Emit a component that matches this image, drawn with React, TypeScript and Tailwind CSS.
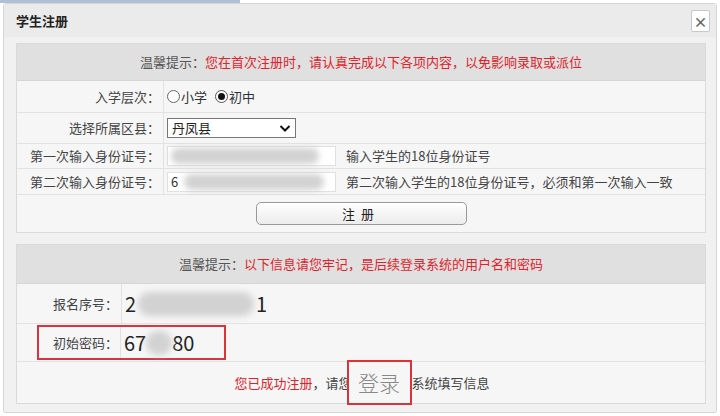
import React from "react";

const font = { fontFamily: '"Noto Sans CJK SC", "Liberation Sans", sans-serif' };

const Blob = ({ className }: { className: string }) => (
  <div className={`rounded-full bg-[#d2d2d2] blur-[3px] ${className}`} />
);

const Row = ({
  label,
  h,
  children,
  labelW = "w-[147px]",
}: {
  label: string;
  h: string;
  children: React.ReactNode;
  labelW?: string;
}) => (
  <div className={`flex ${h} border-b border-[#e2e2e2]`}>
    <div className={`${labelW} shrink-0 flex items-center justify-end pr-[3px] border-r border-[#e2e2e2] text-[#444]`}>
      {label}
    </div>
    <div className="flex-1 flex items-center pl-[3px]">{children}</div>
  </div>
);

export default function App() {
  return (
    <div className="w-[720px] h-[416px] bg-white overflow-hidden text-[13px]" style={font}>
      <div className="h-[3px] w-[240px] bg-[#aebfd6]" />
      <div className="mx-[3px] h-[410px] bg-[#f1f1f1] border border-[#d4d4d4] rounded-[3px] flex flex-col">
        {/* title bar */}
        <div className="h-[33px] shrink-0 flex items-center justify-between pl-[12px] pr-[6px] bg-[#ebebeb]">
          <span className="font-bold text-[13px] text-[#222]">学生注册</span>
          <div className="w-[19px] h-[22px] bg-white border border-[#c9c9c9] rounded-[2px] flex items-center justify-center text-[#666] text-[14px] font-bold leading-none">
            ×
          </div>
        </div>

        {/* panel 1 */}
        <div className="mt-[6px] ml-[12px] w-[690px] bg-[#f6f6f6] border border-[#dadada]">
          <div className="h-[37px] flex items-center justify-center bg-[#e0e0e0] border-b border-[#d6d6d6]">
            <span className="text-[#555]">温馨提示：</span>
            <span className="text-[#e0222b]">您在首次注册时，请认真完成以下各项内容，以免影响录取或派位</span>
          </div>
          <Row label="入学层次：" h="h-[32px]">
            <label className="flex items-center text-[#333]">
              <span className="w-[13px] h-[13px] rounded-full border border-[#666] bg-white mr-[1px]" />
              小学
            </label>
            <label className="flex items-center text-[#333] ml-[8px]">
              <span className="w-[13px] h-[13px] rounded-full border border-[#555] bg-white mr-[1px] flex items-center justify-center">
                <span className="w-[7px] h-[7px] rounded-full bg-[#111]" />
              </span>
              初中
            </label>
          </Row>
          <Row label="选择所属区县：" h="h-[31px]">
            <div className="w-[129px] h-[20px] bg-white border border-[#777] flex items-center justify-between px-[4px] text-[#222]">
              <span>丹凤县</span>
              <svg width="12" height="9" viewBox="0 0 12 9">
                <path d="M1.5 2 L6 6.5 L10.5 2" fill="none" stroke="#111" strokeWidth="2" />
              </svg>
            </div>
          </Row>
          <Row label="第一次输入身份证号：" h="h-[25px]">
            <div className="w-[169px] h-[20px] bg-white border border-[#e0e0e0] flex items-center px-[3px]">
              <Blob className="w-[148px] h-[16px]" />
            </div>
            <span className="ml-[10px] text-[#444]">输入学生的18位身份证号</span>
          </Row>
          <Row label="第二次输入身份证号：" h="h-[26px]">
            <div className="w-[169px] h-[20px] bg-white border border-[#e0e0e0] flex items-center px-[3px] text-[#333]">
              <span>6</span>
              <Blob className="ml-[6px] w-[140px] h-[16px]" />
            </div>
            <span className="ml-[10px] text-[#444]">第二次输入学生的18位身份证号，必须和第一次输入一致</span>
          </Row>
          <div className="h-[37px] flex items-center justify-center">
            <div className="w-[211px] h-[23px] rounded-[5px] border border-[#999] bg-gradient-to-b from-white to-[#ececec] flex items-center justify-center text-[#222] tracking-[6px]">
              注册
            </div>
          </div>
        </div>

        {/* panel 2 */}
        <div className="mt-[11px] ml-[12px] w-[690px] bg-[#f6f6f6] border border-[#dadada]">
          <div className="h-[39px] flex items-center justify-center bg-[#e0e0e0] border-b border-[#d6d6d6]">
            <span className="text-[#555]">温馨提示：</span>
            <span className="text-[#e0222b]">以下信息请您牢记，是后续登录系统的用户名和密码</span>
          </div>
          <Row label="报名序号：" h="h-[40px]" labelW="w-[105px]">
            <span className="text-[20px] text-[#222]">2</span>
            <Blob className="ml-[2px] w-[116px] h-[24px]" />
            <span className="text-[20px] text-[#222] ml-[2px]">1</span>
          </Row>
          <div className="flex h-[38px] border-b border-[#e2e2e2]">
            <div className="ml-[20px] my-[1px] flex border-2 border-[#d9343b]">
              <div className="w-[82px] flex items-center justify-end pr-[2px] border-r border-[#e2e2e2] text-[#444]">
                初始密码：
              </div>
              <div className="w-[103px] flex items-center pl-[3px]">
                <span className="text-[20px] text-[#222]">67</span>
                <Blob className="w-[26px] h-[24px]" />
                <span className="text-[20px] text-[#222]">80</span>
              </div>
            </div>
          </div>
          <div className="h-[41px] flex items-center justify-center pl-[2px]">
            <span className="text-[#e0222b]">您已成功注册</span>
            <span className="text-[#444]">，请您</span>
            <span className="-ml-[5px] h-[45px] w-[65px] -my-[2px] border-2 border-[#d9343b] bg-[#f6f6f6] flex items-center justify-center text-[21px] font-light text-[#888]">
              登录
            </span>
            <span className="text-[#444]">系统填写信息</span>
          </div>
        </div>
      </div>
    </div>
  );
}
